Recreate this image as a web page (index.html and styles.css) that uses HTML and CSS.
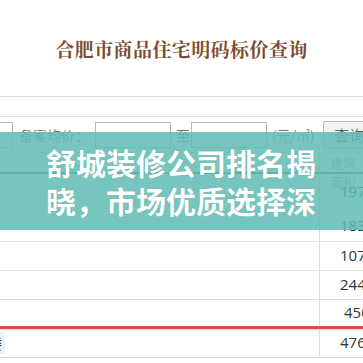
FILE: index.html
```html
<!DOCTYPE html>
<html lang="zh-CN">
<head>
<meta charset="utf-8">
<title>合肥市商品住宅明码标价查询</title>
<link rel="stylesheet" href="styles.css">
</head>
<body>
<div class="page">
  <header class="title-bar">
    <h1>合肥市商品住宅明码标价查询</h1>
  </header>

  <div class="filter">
    <span class="box box-cut"></span>
    <span class="label">备案均价：</span>
    <span class="box"></span>
    <span class="to">至</span>
    <span class="box"></span>
    <span class="unit">(元/㎡)</span>
    <span class="btn">查询</span>
  </div>

  <div class="grid">
    <div class="row head"><div class="c1"></div><div class="c2 hd">建筑面积</div></div>
    <div class="row r1"><div class="c1"></div><div class="c2 num">197</div></div>
    <div class="row r2"><div class="c1"></div><div class="c2 num">183</div></div>
    <div class="row r3"><div class="c1"></div><div class="c2 num">107</div></div>
    <div class="row r4"><div class="c1"></div><div class="c2 num">244</div></div>
    <div class="row r5 mark"><div class="c1"></div><div class="c2 num shift">450</div></div>
    <div class="row r6"><div class="c1"><span class="tag">楼</span></div><div class="c2 num">476</div></div>
  </div>

  <div class="overlay">
    <p>舒城装修公司排名揭晓，市场优质选择深</p>
  </div>
</div>
</body>
</html>
```

FILE: styles.css
```css
html, body {
  margin: 0;
  padding: 0;
  background: #fff;
}

body {
  width: 363px;
  height: 363px;
  overflow: hidden;
  font-family: "Noto Sans CJK SC", "Noto Sans", sans-serif;
}

.page {
  position: relative;
  width: 363px;
  height: 363px;
  overflow: hidden;
}

.title-bar {
  height: 96px;
  border-bottom: 1px solid #dcdcdc;
  display: flex;
  align-items: center;
  justify-content: center;
}

.title-bar h1 {
  margin: 0;
  font-family: "Noto Serif CJK SC", "Noto Sans CJK SC", serif;
  font-size: 19px;
  font-weight: 700;
  line-height: 1;
  color: #7d4c2f;
  letter-spacing: 0.4px;
}

.filter {
  margin-top: 19px;
  height: 35px;
  border-top: 1px solid #e2e2e2;
  display: flex;
  align-items: center;
  font-size: 14px;
  color: #555;
  white-space: nowrap;
}

.box {
  flex: none;
  width: 74px;
  height: 24px;
  border: 1px solid #b8b8b8;
  background: #fff;
}

.box-cut {
  margin-left: -63px;
}

.label {
  margin: 0 6px 0 6px;
  font-weight: 300;
}

.to {
  margin: 0 1px 0 5px;
  font-weight: 300;
}

.unit {
  margin-left: 5px;
  font-weight: 300;
  font-size: 14px;
}

.btn {
  flex: none;
  margin-left: 9px;
  height: 26px;
  padding: 0 10px;
  border: 1px solid #bdbdbd;
  border-radius: 2px;
  background: #f2f2f2;
  font-size: 15px;
  line-height: 26px;
  color: #444;
  font-weight: 300;
}

.grid {
  border-top: 1px solid #dedede;
}

.row {
  display: grid;
  grid-template-columns: 320px 1fr;
  border-bottom: 1px solid #e3e3e3;
}

.c1 {
  border-right: 1px solid #dcdcdc;
  display: flex;
  align-items: center;
}

.c2 {
  display: flex;
  align-items: center;
}

.head {
  height: 19px;
  border-bottom: 2px solid #6e6e6e;
}

.hd {
  padding-left: 10px;
  font-size: 13px;
  color: #8a8a8a;
  font-weight: 300;
}

.num {
  padding-left: 20px;
  padding-bottom: 3px;
  font-family: "Open Sans", "Noto Sans", sans-serif;
  font-size: 15px;
  color: #333;
}

.shift {
  padding-left: 24px;
}

.r1 { height: 37px; }
.r2 { height: 29px; }
.r3 { height: 28px; }
.r4 { height: 28px; }
.r5 { height: 26px; }
.r6 { height: 28px; border-bottom-color: #dadada; }

.mark {
  border-bottom: 3px solid #dc4c45;
  box-shadow: 0 1px 2px rgba(220, 76, 69, 0.35);
}

.tag {
  margin-left: -12px;
  padding: 1px 3px 1px 0;
  background: #eef3f7;
  font-size: 14px;
  color: #333;
}

.overlay {
  position: absolute;
  left: 0;
  right: 0;
  top: 132px;
  height: 98px;
  background: rgba(96, 187, 179, 0.86);
  display: flex;
  align-items: center;
  justify-content: center;
}

.overlay p {
  margin: 0;
  width: 271px;
  font-size: 30px;
  font-weight: 700;
  line-height: 38px;
  color: #fff;
  text-shadow: 0 0 1px rgba(0, 0, 0, 0.15);
}
```
